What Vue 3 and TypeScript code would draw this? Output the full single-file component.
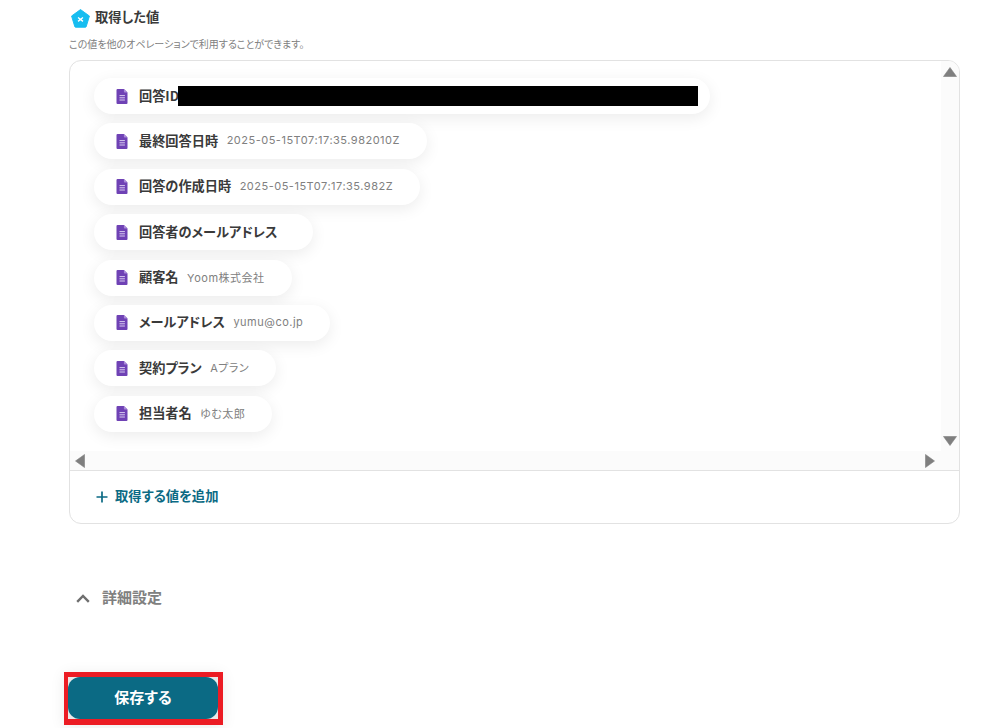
<script setup lang="ts">
interface Row { label: string; value: string; redacted?: boolean }
const rows: Row[] = [
  { label: '回答ID', value: '', redacted: true },
  { label: '最終回答日時', value: '2025-05-15T07:17:35.982010Z' },
  { label: '回答の作成日時', value: '2025-05-15T07:17:35.982Z' },
  { label: '回答者のメールアドレス', value: '' },
  { label: '顧客名', value: 'Yoom株式会社' },
  { label: 'メールアドレス', value: 'yumu@co.jp' },
  { label: '契約プラン', value: 'Aプラン' },
  { label: '担当者名', value: 'ゆむ太郎' },
]
</script>

<template>
  <main class="page">
    <header class="heading">
      <svg class="logo" viewBox="0 0 20 20" aria-hidden="true">
        <path d="M10 .6 19.4 7.4 16 18.6a1 1 0 0 1-.9.6H4.9a1 1 0 0 1-.9-.6L.6 7.4Z" fill="#17bdf0" stroke="#17bdf0" stroke-linejoin="round" />
        <path d="M7.4 9 12.6 13M12.6 9 7.4 13" stroke="#fff" stroke-width="1.4" fill="none" />
      </svg>
      <h2 class="title">取得した値</h2>
    </header>
    <p class="hint">この値を他のオペレーションで利用することができます。</p>

    <section class="box">
      <div class="scroller">
        <div class="rows">
          <div v-for="row in rows" :key="row.label" class="pill">
            <svg class="doc" viewBox="0 0 11 15" aria-hidden="true">
              <path d="M1 0h6.4L11 3.6V14a1 1 0 0 1-1 1H1a1 1 0 0 1-1-1V1a1 1 0 0 1 1-1Z" fill="#6f42b5" />
              <path d="M7.4 0 11 3.6H8.2a.8.8 0 0 1-.8-.8Z" fill="#a98ad8" />
              <path d="M3 6.6h5.4M3 8.8h5.4M3 11h5.4" stroke="#d9cdf0" stroke-width="1" fill="none" />
            </svg>
            <span class="label">{{ row.label }}</span>
            <span v-if="row.redacted" class="redacted"></span>
            <span v-else class="value">{{ row.value }}</span>
          </div>
        </div>
        <div class="vbar">
          <svg class="arrow" viewBox="0 0 14 10" aria-hidden="true"><path d="M7 .5 13.5 9.5H.5Z" fill="#7f7f7f" stroke="#7f7f7f" stroke-width=".6" stroke-linejoin="round" /></svg>
          <svg class="arrow" viewBox="0 0 14 10" aria-hidden="true"><path d="M.5 .5H13.5L7 9.5Z" fill="#7f7f7f" stroke="#7f7f7f" stroke-width=".6" stroke-linejoin="round" /></svg>
        </div>
        <div class="hbar">
          <svg class="arrow-h" viewBox="0 0 10 14" aria-hidden="true"><path d="M9.5 .5V13.5L.5 7Z" fill="#7f7f7f" stroke="#7f7f7f" stroke-width=".6" stroke-linejoin="round" /></svg>
          <svg class="arrow-h" viewBox="0 0 10 14" aria-hidden="true"><path d="M.5 .5V13.5L9.5 7Z" fill="#7f7f7f" stroke="#7f7f7f" stroke-width=".6" stroke-linejoin="round" /></svg>
        </div>
        <div class="corner"></div>
      </div>
      <div class="add">
        <svg class="plus" viewBox="0 0 12 12" aria-hidden="true"><path d="M6 .5v11M.5 6h11" stroke="#0b6a84" stroke-width="1.7" fill="none" /></svg>
        <span>取得する値を追加</span>
      </div>
    </section>

    <div class="details">
      <svg class="chevron" viewBox="0 0 14 9" aria-hidden="true"><path d="M1.2 7.8 7 2l5.8 5.8" stroke="#6f6f6f" stroke-width="2.4" fill="none" /></svg>
      <span>詳細設定</span>
    </div>

    <div class="save-frame">
      <button class="save" type="button">保存する</button>
    </div>
  </main>
</template>

<style scoped>
.page {
  box-sizing: border-box;
  width: 1005px;
  height: 728px;
  overflow: hidden;
  padding: 7px 45px 0 69px;
  background: #fff;
  font-family: "Noto Sans CJK JP", "Noto Sans", sans-serif;
  font-feature-settings: "palt";
  color: #333;
}
.heading {
  display: flex;
  align-items: center;
  gap: 5px;
  height: 20px;
  padding-left: 2px;
}
.logo { width: 19px; height: 19px; flex: none; margin-top: 2px; }
.title {
  margin: 0;
  font-size: 13.3px;
  font-weight: 700;
  line-height: 20px;
  color: #3a3a3a;
}
.hint {
  margin: 10px 0 0;
  font-size: 10px;
  line-height: 14px;
  color: #808080;
}
.box {
  box-sizing: border-box;
  height: 464px;
  margin-top: 9px;
  border: 1px solid #e2e2e2;
  border-radius: 12px;
  overflow: hidden;
}
.scroller {
  display: grid;
  grid-template-columns: 1fr 18px;
  grid-template-rows: 390px 19px;
  height: 409px;
  border-bottom: 1px solid #e2e2e2;
}
.rows {
  display: flex;
  flex-direction: column;
  align-items: flex-start;
  gap: 9.4px;
  padding: 17px 0 0 24px;
  overflow: hidden;
}
.pill {
  display: flex;
  align-items: center;
  flex: none;
  height: 36px;
  padding: 0 27px 0 22px;
  border-radius: 18px;
  background: #fff;
  box-shadow: 0 4px 16px rgba(0, 0, 0, 0.08);
}
.doc { width: 12px; height: 15px; flex: none; margin-right: 11px; }
.label {
  padding-bottom: 2px;
  font-size: 13.2px;
  font-weight: 700;
  color: #3a3a3a;
  white-space: nowrap;
}
.value {
  margin-left: 8.5px;
  padding-bottom: 2px;
  font-family: Inter, "Noto Sans CJK JP", sans-serif;
  font-size: 11px;
  letter-spacing: 0.5px;
  color: #808080;
  white-space: nowrap;
}
.redacted {
  display: block;
  width: 520px;
  height: 20px;
  margin-left: -1px;
  margin-right: -15px;
  background: #000;
}
.vbar {
  display: flex;
  flex-direction: column;
  justify-content: space-between;
  align-items: center;
  padding: 6px 1px 5px 0;
  background: #fbfbfb;
}
.arrow { width: 14px; height: 10px; }
.hbar {
  display: flex;
  justify-content: space-between;
  align-items: center;
  padding: 0 6px 0 5px;
  background: #fbfbfb;
}
.arrow-h { width: 10px; height: 14px; }
.corner { background: #fbfbfb; }
.add {
  display: flex;
  align-items: center;
  gap: 7px;
  height: 53px;
  padding-left: 26px;
  font-size: 13.3px;
  font-weight: 700;
  color: #0b6a84;
}
.add span { padding-bottom: 4px; }
.plus { width: 12px; height: 12px; flex: none; margin-top: -2px; }
.details {
  display: flex;
  align-items: center;
  gap: 12px;
  height: 24px;
  margin-top: 62px;
  padding-left: 7px;
  font-size: 15px;
  font-weight: 700;
  color: #808080;
}
.details span { padding-bottom: 4px; }
.chevron { width: 14px; height: 9px; flex: none; }
.save-frame {
  box-sizing: border-box;
  width: 159px;
  height: 53px;
  margin: 62px 0 0 -5px;
  border-style: solid;
  border-color: #ec1c24;
  border-width: 5px 5px 6px 4px;
  background: #e9e9e9;
  box-shadow: 0 2px 14px rgba(0, 0, 0, 0.08);
}
.save {
  display: block;
  width: 100%;
  height: 42px;
  padding: 0 0 3px;
  border: 0;
  border-radius: 12px;
  background: #0b6a84;
  color: #fff;
  font-family: inherit;
  font-feature-settings: inherit;
  font-size: 15px;
  font-weight: 700;
}
</style>

<style>
html, body { margin: 0; background: #fff; }
</style>
